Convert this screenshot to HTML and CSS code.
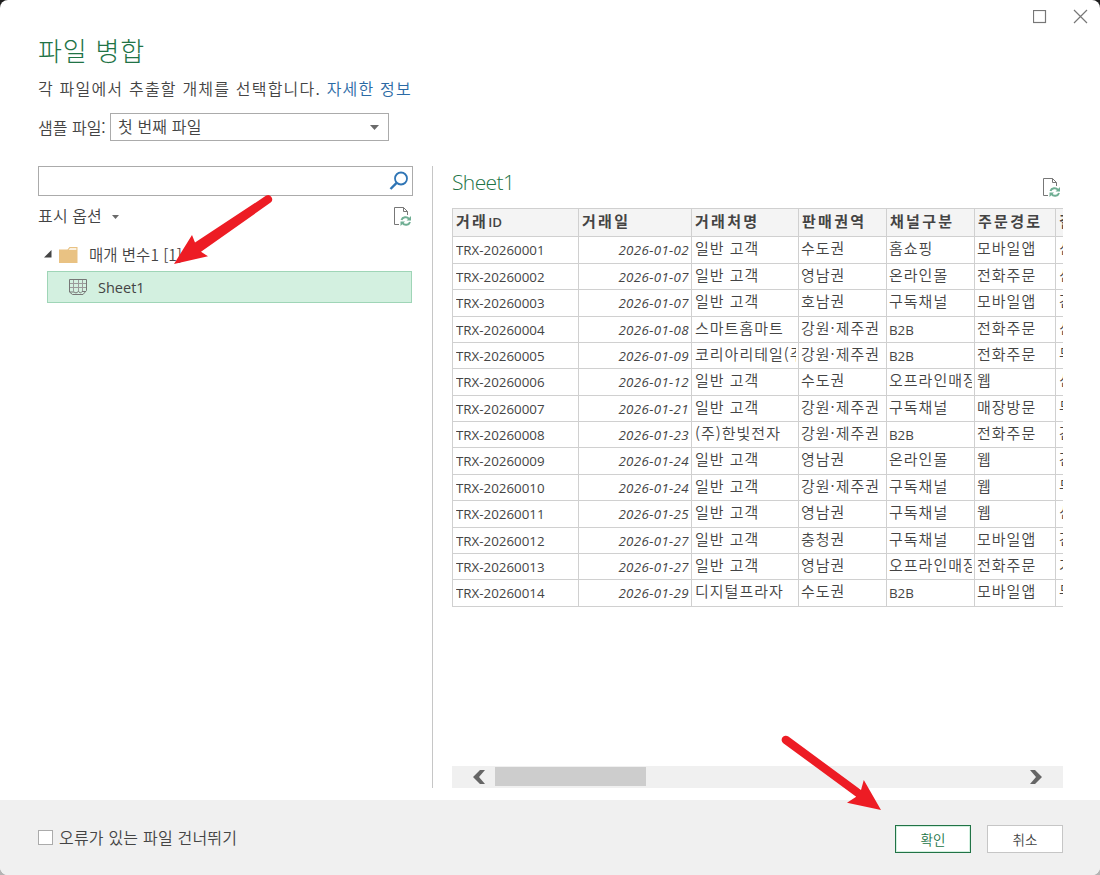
FILE: index.html
```html
<!DOCTYPE html>
<html lang="ko">
<head>
    <meta charset="UTF-8">
    <meta name="viewport" content="width=device-width, initial-scale=1.0">
    <title>파일 병합</title>
    <link rel="stylesheet" href="styles.css">
</head>
<body>
    <div class="dialog">
        <div class="titlebar">
            <svg class="win-icon" width="14" height="14" viewBox="0 0 14 14"><rect x=".5" y=".5" width="12" height="12"/></svg>
            <svg class="win-icon" width="15" height="15" viewBox="0 0 15 15"><path d="M1 1L14 14M14 1L1 14"/></svg>
        </div>

        <div class="header">
            <h1>파일 병합</h1>
            <p class="intro"><span>각 파일에서 추출할 개체를 선택합니다.</span> <a class="more">자세한 정보</a></p>
            <div class="sample">
                <label>샘플 파일:</label>
                <div class="select">
                    <span>첫 번째 파일</span>
                    <svg width="9" height="5" viewBox="0 0 9 5"><path d="M0 0H9L4.5 5Z" fill="#6a6a6a"/></svg>
                </div>
            </div>
        </div>

        <div class="main">
            <div class="nav">
                <div class="search">
                    <svg width="20" height="20" viewBox="0 0 20 20" fill="none" stroke="#2f75b5" stroke-width="1.8"><circle cx="12" cy="7.5" r="6"/><path d="M7.6 11.8L1.5 18" stroke-width="2.4"/></svg>
                </div>
                <div class="options">
                    <span>표시 옵션</span>
                    <svg width="7" height="4" viewBox="0 0 7 4"><path d="M0 0H7L3.5 4Z" fill="#6a6a6a"/></svg>
                    <svg class="refresh" width="19" height="20" viewBox="0 0 19 20"><use href="#refresh"/></svg>
                </div>
                <div class="folder">
                    <svg width="8" height="8" viewBox="0 0 8 8"><path d="M7.5 0V7.5H0Z" fill="#444"/></svg>
                    <svg class="folder-icon" width="19" height="16" viewBox="0 0 19 16"><path d="M0 2.5H8.5L10.5 0H18.5V16H0Z" fill="#e9c283"/><path d="M9.6 2.8L11 1.2H17.4V2.8Z" fill="#fff"/></svg>
                    <span>매개 변수1 [1]</span>
                </div>
                <div class="sheet">
                    <svg width="19" height="16" viewBox="0 0 19 16" fill="none" stroke="#777">
                        <path d="M4.5 12.5V.5M9.5 12.5V.5M13.5 12.5V.5M.5 4.5H18M.5 8.5H18" stroke="#9a9a9a"/>
                        <path d="M.5 13V.5H17.5V11.5L14 15.5H3.5L.5 13ZM.5 13H5L7 14L9.5 12.5L11.5 14L13 12.5H17"/>
                    </svg>
                    <span>Sheet1</span>
                </div>
            </div>

            <div class="preview">
                <div class="preview-head">
                    <h2>Sheet1</h2>
                    <svg class="refresh" width="19" height="20" viewBox="0 0 19 20">
                        <g id="refresh" fill="none">
                            <path d="M6 17.5H1.5V.5H10.5L14.5 4.5V8M10.5 .5V4.5H14.5" stroke="#777"/>
                            <path d="M8.5 13C9.5 9.8 14 9.3 16 11.8M17 15C16 18.2 11.5 18.7 9.5 16.2" stroke="#6fae93" stroke-width="2"/>
                            <path d="M18 9V13.5H13.5ZM7.5 19V14.5H12Z" fill="#6fae93"/>
                        </g>
                    </svg>
                </div>
                <div class="grid">
                    <table>
                        <colgroup>
                            <col class="c-id"><col class="c-date"><col class="c-customer"><col class="c-region"><col class="c-channel"><col class="c-route"><col class="c-pay">
                        </colgroup>
                        <thead>
                            <tr><th>거래<small>ID</small></th><th>거래일</th><th>거래처명</th><th>판매권역</th><th>채널구분</th><th>주문경로</th><th>결제수단</th></tr>
                        </thead>
                        <tbody>
                            <tr><td>TRX-20260001</td><td>2026-01-02</td><td>일반 고객</td><td>수도권</td><td>홈쇼핑</td><td>모바일앱</td><td>신용카드</td></tr>
                            <tr><td>TRX-20260002</td><td>2026-01-07</td><td>일반 고객</td><td>영남권</td><td>온라인몰</td><td>전화주문</td><td>신용카드</td></tr>
                            <tr><td>TRX-20260003</td><td>2026-01-07</td><td>일반 고객</td><td>호남권</td><td>구독채널</td><td>모바일앱</td><td>간편결제</td></tr>
                            <tr><td>TRX-20260004</td><td>2026-01-08</td><td>스마트홈마트</td><td>강원·제주권</td><td class="latin">B2B</td><td>전화주문</td><td>신용카드</td></tr>
                            <tr><td>TRX-20260005</td><td>2026-01-09</td><td>코리아리테일(주)</td><td>강원·제주권</td><td class="latin">B2B</td><td>전화주문</td><td>무통장입금</td></tr>
                            <tr><td>TRX-20260006</td><td>2026-01-12</td><td>일반 고객</td><td>수도권</td><td>오프라인매장</td><td>웹</td><td>신용카드</td></tr>
                            <tr><td>TRX-20260007</td><td>2026-01-21</td><td>일반 고객</td><td>강원·제주권</td><td>구독채널</td><td>매장방문</td><td>무통장입금</td></tr>
                            <tr><td>TRX-20260008</td><td>2026-01-23</td><td>(주)한빛전자</td><td>강원·제주권</td><td class="latin">B2B</td><td>전화주문</td><td>간편결제</td></tr>
                            <tr><td>TRX-20260009</td><td>2026-01-24</td><td>일반 고객</td><td>영남권</td><td>온라인몰</td><td>웹</td><td>간편결제</td></tr>
                            <tr><td>TRX-20260010</td><td>2026-01-24</td><td>일반 고객</td><td>강원·제주권</td><td>구독채널</td><td>웹</td><td>무통장입금</td></tr>
                            <tr><td>TRX-20260011</td><td>2026-01-25</td><td>일반 고객</td><td>영남권</td><td>구독채널</td><td>웹</td><td>신용카드</td></tr>
                            <tr><td>TRX-20260012</td><td>2026-01-27</td><td>일반 고객</td><td>충청권</td><td>구독채널</td><td>모바일앱</td><td>간편결제</td></tr>
                            <tr><td>TRX-20260013</td><td>2026-01-27</td><td>일반 고객</td><td>영남권</td><td>오프라인매장</td><td>전화주문</td><td>가상계좌</td></tr>
                            <tr><td>TRX-20260014</td><td>2026-01-29</td><td>디지털프라자</td><td>수도권</td><td class="latin">B2B</td><td>모바일앱</td><td>무통장입금</td></tr>
                        </tbody>
                    </table>
                </div>
                <div class="scrollbar">
                    <svg width="12" height="14" viewBox="0 0 12 14"><path d="M7 0H12L6 7L12 14H7L0 7Z" fill="#666"/></svg>
                    <div class="thumb"></div>
                    <svg width="12" height="14" viewBox="0 0 12 14"><path d="M5 0H0L6 7L0 14H5L12 7Z" fill="#666"/></svg>
                </div>
            </div>
        </div>

        <div class="footer">
            <div class="checkbox"></div>
            <span class="skip">오류가 있는 파일 건너뛰기</span>
            <button type="button" class="ok">확인</button>
            <button type="button">취소</button>
        </div>
    </div>

    <!-- step arrows over the dialog -->
    <svg class="arrows" width="1100" height="875" viewBox="0 0 1100 875" fill="#ed1c24">
        <path d="M174 264L192 235L195 242.5L266.2 195.6A4.2 4.2 0 0 1 271 202.3L201 251.7L208 256.3Z"/>
        <path d="M881 810L847 802.7L856.2 796.7L783.3 743.2A4.2 4.2 0 0 1 788.4 736.5L861 790L863.8 780Z"/>
    </svg>
</body>
</html>
```
FILE: styles.css
```css
* {
    box-sizing: border-box;
}
body {
    margin: 0;
    background: linear-gradient(#1e1e1e 50%, #b4b4b4 50%);
    font-family: "Open Sans", "Noto Sans CJK KR", sans-serif;
    font-size: 16px;
    color: #444;
}
h1, h2, p {
    margin: 0;
    font-weight: 300;
}
svg {
    display: block;
    flex: none;
}
.dialog {
    display: flex;
    flex-direction: column;
    width: 1100px;
    height: 875px;
    background: #fff;
    border-radius: 8px;
    overflow: hidden;
}
.titlebar {
    display: flex;
    justify-content: flex-end;
    align-items: center;
    gap: 26px;
    height: 33px;
    padding-right: 12px;
}
.win-icon {
    fill: none;
    stroke: #777;
    stroke-width: 1.2;
}
.header {
    height: 133px;
    padding-left: 38px;
    font-family: "Noto Sans CJK KR", sans-serif;
    white-space: nowrap;
}
h1 {
    height: 38px;
    line-height: 33px;
    font-size: 26px;
    letter-spacing: 0.8px;
    color: #217346;
}
.intro {
    height: 42px;
    line-height: 34px;
    font-weight: 350;
    letter-spacing: 1.2px;
}
.more {
    color: #2b6aa5;
}
.sample {
    display: flex;
    align-items: center;
    gap: 4px;
    font-weight: 350;
}
.sample label {
    width: 68px;
}
.select {
    display: flex;
    align-items: center;
    justify-content: space-between;
    width: 279px;
    height: 28px;
    padding: 0 9px 0 7px;
    border: 1px solid #ababab;
}
.select span {
    padding-bottom: 2px;
    letter-spacing: 0.15px;
}
.main {
    display: flex;
    height: 634px;
    padding: 0 37px 12px 38px;
}
.nav {
    width: 395px;
    padding-right: 19px;
    border-right: 1px solid #c6c6c6;
}
.search {
    display: flex;
    align-items: center;
    justify-content: flex-end;
    height: 30px;
    padding-right: 3px;
    border: 1px solid #ababab;
}
.options {
    display: flex;
    align-items: center;
    gap: 10px;
    height: 41px;
    padding-right: 1px;
    font-weight: 350;
}
.options span {
    padding-bottom: 4px;
    letter-spacing: 0.2px;
}
.options .refresh {
    margin-left: auto;
}
.folder {
    display: flex;
    align-items: center;
    height: 34px;
    padding-left: 6px;
    font-family: "Noto Sans CJK KR", sans-serif;
    font-size: 15.5px;
    font-weight: 350;
}
.folder-icon {
    margin: 1px 11px 0 7px;
}
.sheet {
    display: flex;
    align-items: center;
    gap: 10px;
    width: 365px;
    height: 32px;
    margin-left: 9px;
    padding-left: 21px;
    border: 1px solid #9fd5b7;
    background: #d3f0e0;
    font-size: 14.5px;
}
.preview {
    display: flex;
    flex-direction: column;
    width: 630px;
    padding-left: 19px;
}
.preview-head {
    display: flex;
    justify-content: space-between;
    height: 42px;
    padding-right: 2px;
}
.preview-head .refresh {
    margin-top: 12px;
}
h2 {
    line-height: 33px;
    font-size: 21px;
    letter-spacing: -0.6px;
    color: #217346;
}
.grid {
    flex: 1;
    overflow: hidden;
}
table {
    width: 675px;
    table-layout: fixed;
    border-collapse: separate;
    border-spacing: 0;
    border-top: 1px solid #d0d0d0;
    border-left: 1px solid #d0d0d0;
}
.c-id { width: 126px; }
.c-date { width: 113px; }
.c-customer { width: 107px; }
.c-region { width: 88px; }
.c-channel { width: 88px; }
.c-route { width: 81px; }
.c-pay { width: 71px; }
th, td {
    height: 26px;
    padding: 0 2px 4px 3px;
    border-right: 1px solid #d0d0d0;
    border-bottom: 1px solid #d0d0d0;
    overflow: clip;
    overflow-clip-margin: content-box;
    white-space: nowrap;
    text-align: left;
    line-height: 20px;
    font-family: "Noto Sans CJK KR", sans-serif;
    font-size: 15px;
    font-weight: 350;
    letter-spacing: 1px;
}
th {
    height: 28px;
    background: #f4f4f4;
    font-weight: 700;
    letter-spacing: 2.3px;
}
th small {
    font: 600 13.33px "Open Sans", sans-serif;
    letter-spacing: 0;
}
td:nth-child(4), td:nth-child(5), td:nth-child(6) {
    padding-left: 2px;
}
/* rows are 26.4px high on average */
tbody tr:nth-child(1) td,
tbody tr:nth-child(3) td,
tbody tr:nth-child(6) td,
tbody tr:nth-child(9) td,
tbody tr:nth-child(11) td,
tbody tr:nth-child(14) td {
    height: 27px;
}
td:nth-child(1), td:nth-child(2), td.latin {
    padding-bottom: 0;
    font-family: "Open Sans", sans-serif;
    font-size: 13.33px;
    font-weight: 430;
    letter-spacing: 0;
}
td:nth-child(2) {
    text-align: right;
    font-style: italic;
    letter-spacing: 0.35px;
}
.scrollbar {
    display: flex;
    align-items: center;
    height: 22px;
    padding: 0 21px;
    background: #f0f0f0;
}
.scrollbar svg:last-child {
    margin-left: auto;
}
.thumb {
    width: 151px;
    height: 19px;
    margin: 0 0 1px 10px;
    background: #cdcdcd;
}
.footer {
    display: flex;
    align-items: center;
    height: 75px;
    padding: 3px 37px 0 38px;
    background: #f0f0f0;
}
.checkbox {
    width: 15px;
    height: 15px;
    margin: 0 6px 3px 0;
    border: 1px solid #ababab;
    background: #fff;
}
.skip {
    margin-right: auto;
    padding-bottom: 4px;
    font-family: "Noto Sans CJK KR", sans-serif;
    font-weight: 350;
    letter-spacing: 0.2px;
}
button {
    width: 76px;
    height: 28px;
    margin-left: 16px;
    padding: 0;
    border: 1px solid #c6c6c6;
    background: #fff;
    font-family: "Noto Sans CJK KR", sans-serif;
    font-size: 13.5px;
    font-weight: 350;
    color: #444;
}
button.ok {
    border-color: #217346;
    box-shadow: inset 0 0 0 1px #d3f0e0;
    color: #217346;
}
.arrows {
    position: absolute;
    top: 0;
    left: 0;
}
```
